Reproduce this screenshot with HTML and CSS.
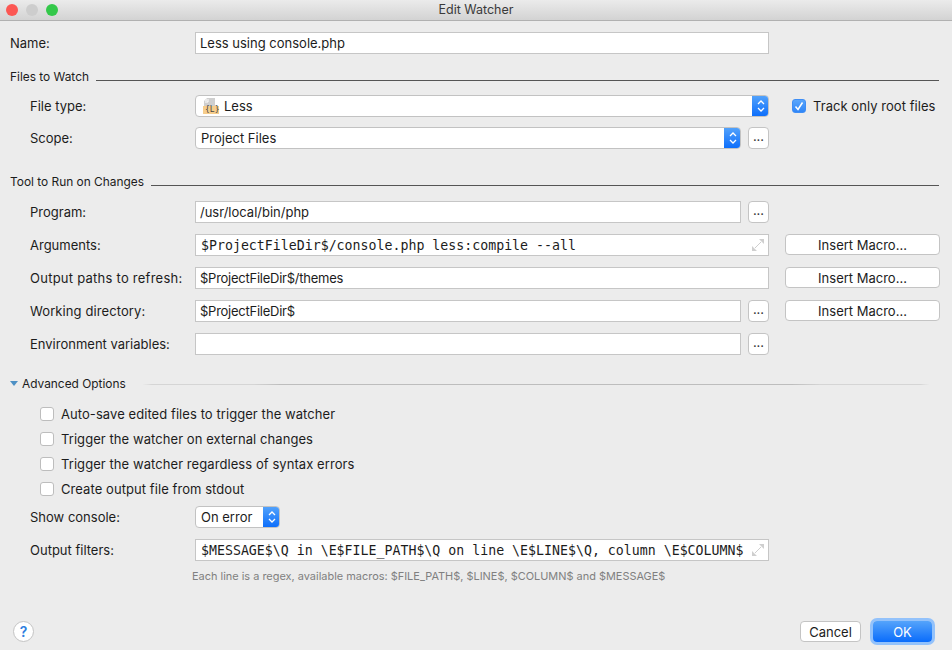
FILE: index.html
```html
<!DOCTYPE html>
<html>
<head>
<meta charset="utf-8">
<title>Edit Watcher</title>
<link rel="stylesheet" href="styles.css">
</head>
<body>
<div class="window">
  <header class="titlebar">
    <div class="lights"><span class="light red"></span><span class="light grey"></span><span class="light green"></span></div>
    <div class="title">Edit Watcher</div>
  </header>
  <main class="form">
    <div class="row first"><label class="lab top">Name:</label><div class="cell"><div class="field">Less using console.php</div></div></div>

    <div class="section s1"><span>Files to Watch</span><i class="rule"></i></div>
    <div class="row r1"><label class="lab">File type:</label><div class="cell"><div class="select"><span class="select-text">
      <svg class="lessicon" width="16" height="16" viewBox="0 0 16 16"><path d="M4 0h8v8H1V3z" fill="#cfcfcf"/><path d="M1 3h3V0z" fill="#ececec"/><path d="M5 1v3H2" fill="none" stroke="#fff" stroke-width="1"/><rect y="8" width="16" height="8" fill="#f6cd8c"/></svg><span class="lesslabel">{L}</span>Less</span><span class="stepper"><svg width="10" height="16" viewBox="0 0 10 16"><path d="M2 6l3-3 3 3M2 10l3 3 3-3" fill="none" stroke="#fff" stroke-width="1.3"/></svg></span></div></div>
      <label class="track"><span class="box on"><svg width="14" height="14" viewBox="0 0 14 14"><path d="M3.5 7.5l2.5 3 4.5-7" fill="none" stroke="#fff" stroke-width="1.5"/></svg></span>Track only root files</label></div>
    <div class="row r2"><label class="lab">Scope:</label><div class="cell"><div class="select grow"><span class="select-text">Project Files</span><span class="stepper"><svg width="10" height="16" viewBox="0 0 10 16"><path d="M2 6l3-3 3 3M2 10l3 3 3-3" fill="none" stroke="#fff" stroke-width="1.3"/></svg></span></div><button class="dots">...</button></div></div>

    <div class="section s2"><span>Tool to Run on Changes</span><i class="rule"></i></div>
    <div class="row r1"><label class="lab">Program:</label><div class="cell"><div class="field grow">/usr/local/bin/php</div><button class="dots">...</button></div></div>
    <div class="row r3"><label class="lab">Arguments:</label><div class="cell"><div class="field mono expand">$ProjectFileDir$/console.php less:compile --all<svg class="exp" width="14" height="14" viewBox="0 0 14 14"><path d="M8 1h5v5zM1 8v5h5z" fill="#cfcfcf"/><path d="M10 4L4 10" stroke="#cfcfcf"/></svg></div></div><button class="macro">Insert Macro...</button></div>
    <div class="row r3"><label class="lab spaced">Output paths to refresh:</label><div class="cell"><div class="field tight">$ProjectFileDir$/themes</div></div><button class="macro">Insert Macro...</button></div>
    <div class="row r3"><label class="lab spaced-sm">Working directory:</label><div class="cell"><div class="field grow tight">$ProjectFileDir$</div><button class="dots">...</button></div><button class="macro">Insert Macro...</button></div>
    <div class="row r3"><label class="lab">Environment variables:</label><div class="cell"><div class="field grow"></div><button class="dots">...</button></div></div>

    <div class="section s3"><svg class="tri" width="9" height="6" viewBox="0 0 9 6"><path d="M0 0h8L4 5z" fill="#4d90c4"/></svg><span>Advanced Options</span><i class="rule light"></i></div>
    <div class="checks">
      <label class="check"><span class="box"></span>Auto-save edited files to trigger the watcher</label>
      <label class="check"><span class="box"></span>Trigger the watcher on external changes</label>
      <label class="check"><span class="box"></span>Trigger the watcher regardless of syntax errors</label>
      <label class="check"><span class="box"></span>Create output file from stdout</label>
    </div>
    <div class="row r4"><label class="lab">Show console:</label><div class="cell"><div class="select small"><span class="select-text">On error</span><span class="stepper"><svg width="10" height="16" viewBox="0 0 10 16"><path d="M2 6l3-3 3 3M2 10l3 3 3-3" fill="none" stroke="#fff" stroke-width="1.3"/></svg></span></div></div></div>
    <div class="row r3"><label class="lab">Output filters:</label><div class="cell"><div class="field mono expand">$MESSAGE$\Q in \E$FILE_PATH$\Q on line \E$LINE$\Q, column \E$COLUMN$<svg class="exp" width="14" height="14" viewBox="0 0 14 14"><path d="M8 1h5v5zM1 8v5h5z" fill="#cfcfcf"/><path d="M10 4L4 10" stroke="#cfcfcf"/></svg></div></div></div>
    <p class="hint">Each line is a regex, available macros: $FILE_PATH$, $LINE$, $COLUMN$ and $MESSAGE$</p>
  </main>
  <footer class="footer">
    <button class="help">?</button>
    <div class="actions"><button class="cancel">Cancel</button><button class="ok">OK</button></div>
  </footer>
</div>
</body>
</html>
```

FILE: styles.css
```css
* { box-sizing: border-box; }
html, body { margin: 0; padding: 0; }
body { width: 952px; height: 650px; overflow: hidden; background: #ececec; color: #1c1c1c; font: 13px/16px "Inter", "Liberation Sans", sans-serif; letter-spacing: 0; }
.window { height: 650px; display: flex; flex-direction: column; }
.titlebar { height: 21px; flex: none; display: flex; align-items: center; justify-content: center; position: relative; background: linear-gradient(#ebebeb, #d3d3d3); border-bottom: 1px solid #b1b1b1; }
.title { font-size: 12.5px; color: #3a3a3a; }
.lights { position: absolute; left: 6px; top: 4px; display: flex; gap: 8px; }
.light { width: 12px; height: 12px; border-radius: 50%; }
.red { background: #fc5753; }
.grey { background: #cdcdcd; }
.green { background: #34c84a; }
.form { padding: 11px 12px 0 10px; flex: none; height: 588px; }
.row { display: grid; grid-template-columns: 185px 574px 155px; column-gap: 0; height: 22px; align-items: center; position: relative; }
.first { margin-top: 0; }
.r1 { margin-top: 11px; }
.s1 + .r1 { margin-top: 10px; }
.r2 { margin-top: 10px; }
.r3 { margin-top: 11px; }
.r4 { margin-top: 5px; }
.lab { padding-left: 20px; white-space: nowrap; }
.lab.top { padding-left: 0; }
.spaced { letter-spacing: 0.25px; }
.spaced-sm { letter-spacing: 0.1px; }
.tight { letter-spacing: -0.25px; }
.cell { display: flex; gap: 7px; height: 22px; align-items: stretch; }
.field { flex: 1; background: #fff; border: 1px solid #c6c6c6; padding: 2px 4px; white-space: nowrap; overflow: hidden; line-height: 17px; position: relative; }
.grow { flex: 1; }
.mono { font: 13.25px/17px "DejaVu Sans Mono", monospace; padding-left: 5px; letter-spacing: 0; }
.exp { position: absolute; right: 3px; top: 3px; }
.section { display: flex; align-items: center; gap: 7px; height: 16px; white-space: nowrap; font-size: 11.9px; }
.s1 { margin-top: 15px; }
.s2 { margin-top: 25px; }
.s3 { margin-top: 21px; gap: 9px; }
.rule { flex: 1; height: 1px; background: #555; margin-top: 6px; margin-right: 1px; }
.rule.light { background: #bdbdbd; margin-top: 0; margin-right: 3px; margin-left: 0; }
.tri { margin-right: -6px; margin-top: 0; }
.select { flex: 1; display: flex; background: #fff; border: 1px solid #c2c2c2; border-radius: 4px; overflow: hidden; }
.select.small { flex: 0 0 85px; }
.select-text { flex: 1; padding: 2px 5px; line-height: 17px; display: flex; align-items: center; position: relative; }
.lessicon { margin-right: 5px; margin-left: 2px; }
.lesslabel { position: absolute; left: 9px; top: 10px; font: 8px/8px "DejaVu Sans Mono", monospace; color: #444; }
.stepper { width: 17px; margin: -1px; flex: none; background: linear-gradient(#55a4fb, #0a6cfb); display: flex; align-items: center; justify-content: center; }
.dots { width: 21px; flex: none; padding: 0 0 5px; background: #fff; border: 1px solid #c4c4c4; border-radius: 4px; font: 13px/12px "Inter", sans-serif; color: #333; }
.macro { height: 21px; align-self: start; background: #fff; border: 1px solid #c4c4c4; border-radius: 4px; font: 13px/16px "Inter", sans-serif; color: #1c1c1c; margin-left: 16px; padding: 0; }
.row > .macro { width: 155px; }
.track { display: flex; align-items: center; gap: 7px; margin-left: 23px; white-space: nowrap; letter-spacing: 0.05px; }
.box { width: 14px; height: 14px; flex: none; background: #fff; border: 1px solid #bdbdbd; border-radius: 3px; display: block; }
.box.on { background: linear-gradient(#5aa6fb, #2f86f8); border-color: #3f8ef5; }
.box svg { display: block; margin: -1px; }
.checks { padding: 9px 0 0 30px; display: flex; flex-direction: column; }
.check { display: flex; align-items: center; gap: 7px; height: 25px; white-space: nowrap; letter-spacing: 0.07px; }
.hint { margin: 7px 0 0 182px; font-size: 10.95px; line-height: 16px; color: #808080; }
.footer { flex: none; height: 41px; display: flex; justify-content: space-between; align-items: flex-start; padding: 12px 20px 0 13px; }
.help { width: 21px; height: 21px; border-radius: 50%; background: #fff; border: 1px solid #c4c4c4; color: #2f7fe0; font: 600 14px/18px "Inter", sans-serif; padding: 0; }
.actions { display: flex; gap: 12px; }
.cancel { width: 61px; height: 21px; background: #fff; border: 1px solid #c4c4c4; border-radius: 4px; font: 13px/16px "Inter", sans-serif; color: #1c1c1c; padding: 0; }
.ok { width: 59px; height: 21px; border: none; border-radius: 4px; background: linear-gradient(#55a4fb, #0a6cfb); box-shadow: 0 0 0 3px #93c2fb; color: #fff; font: 13px/16px "Inter", sans-serif; padding: 0; }
```
